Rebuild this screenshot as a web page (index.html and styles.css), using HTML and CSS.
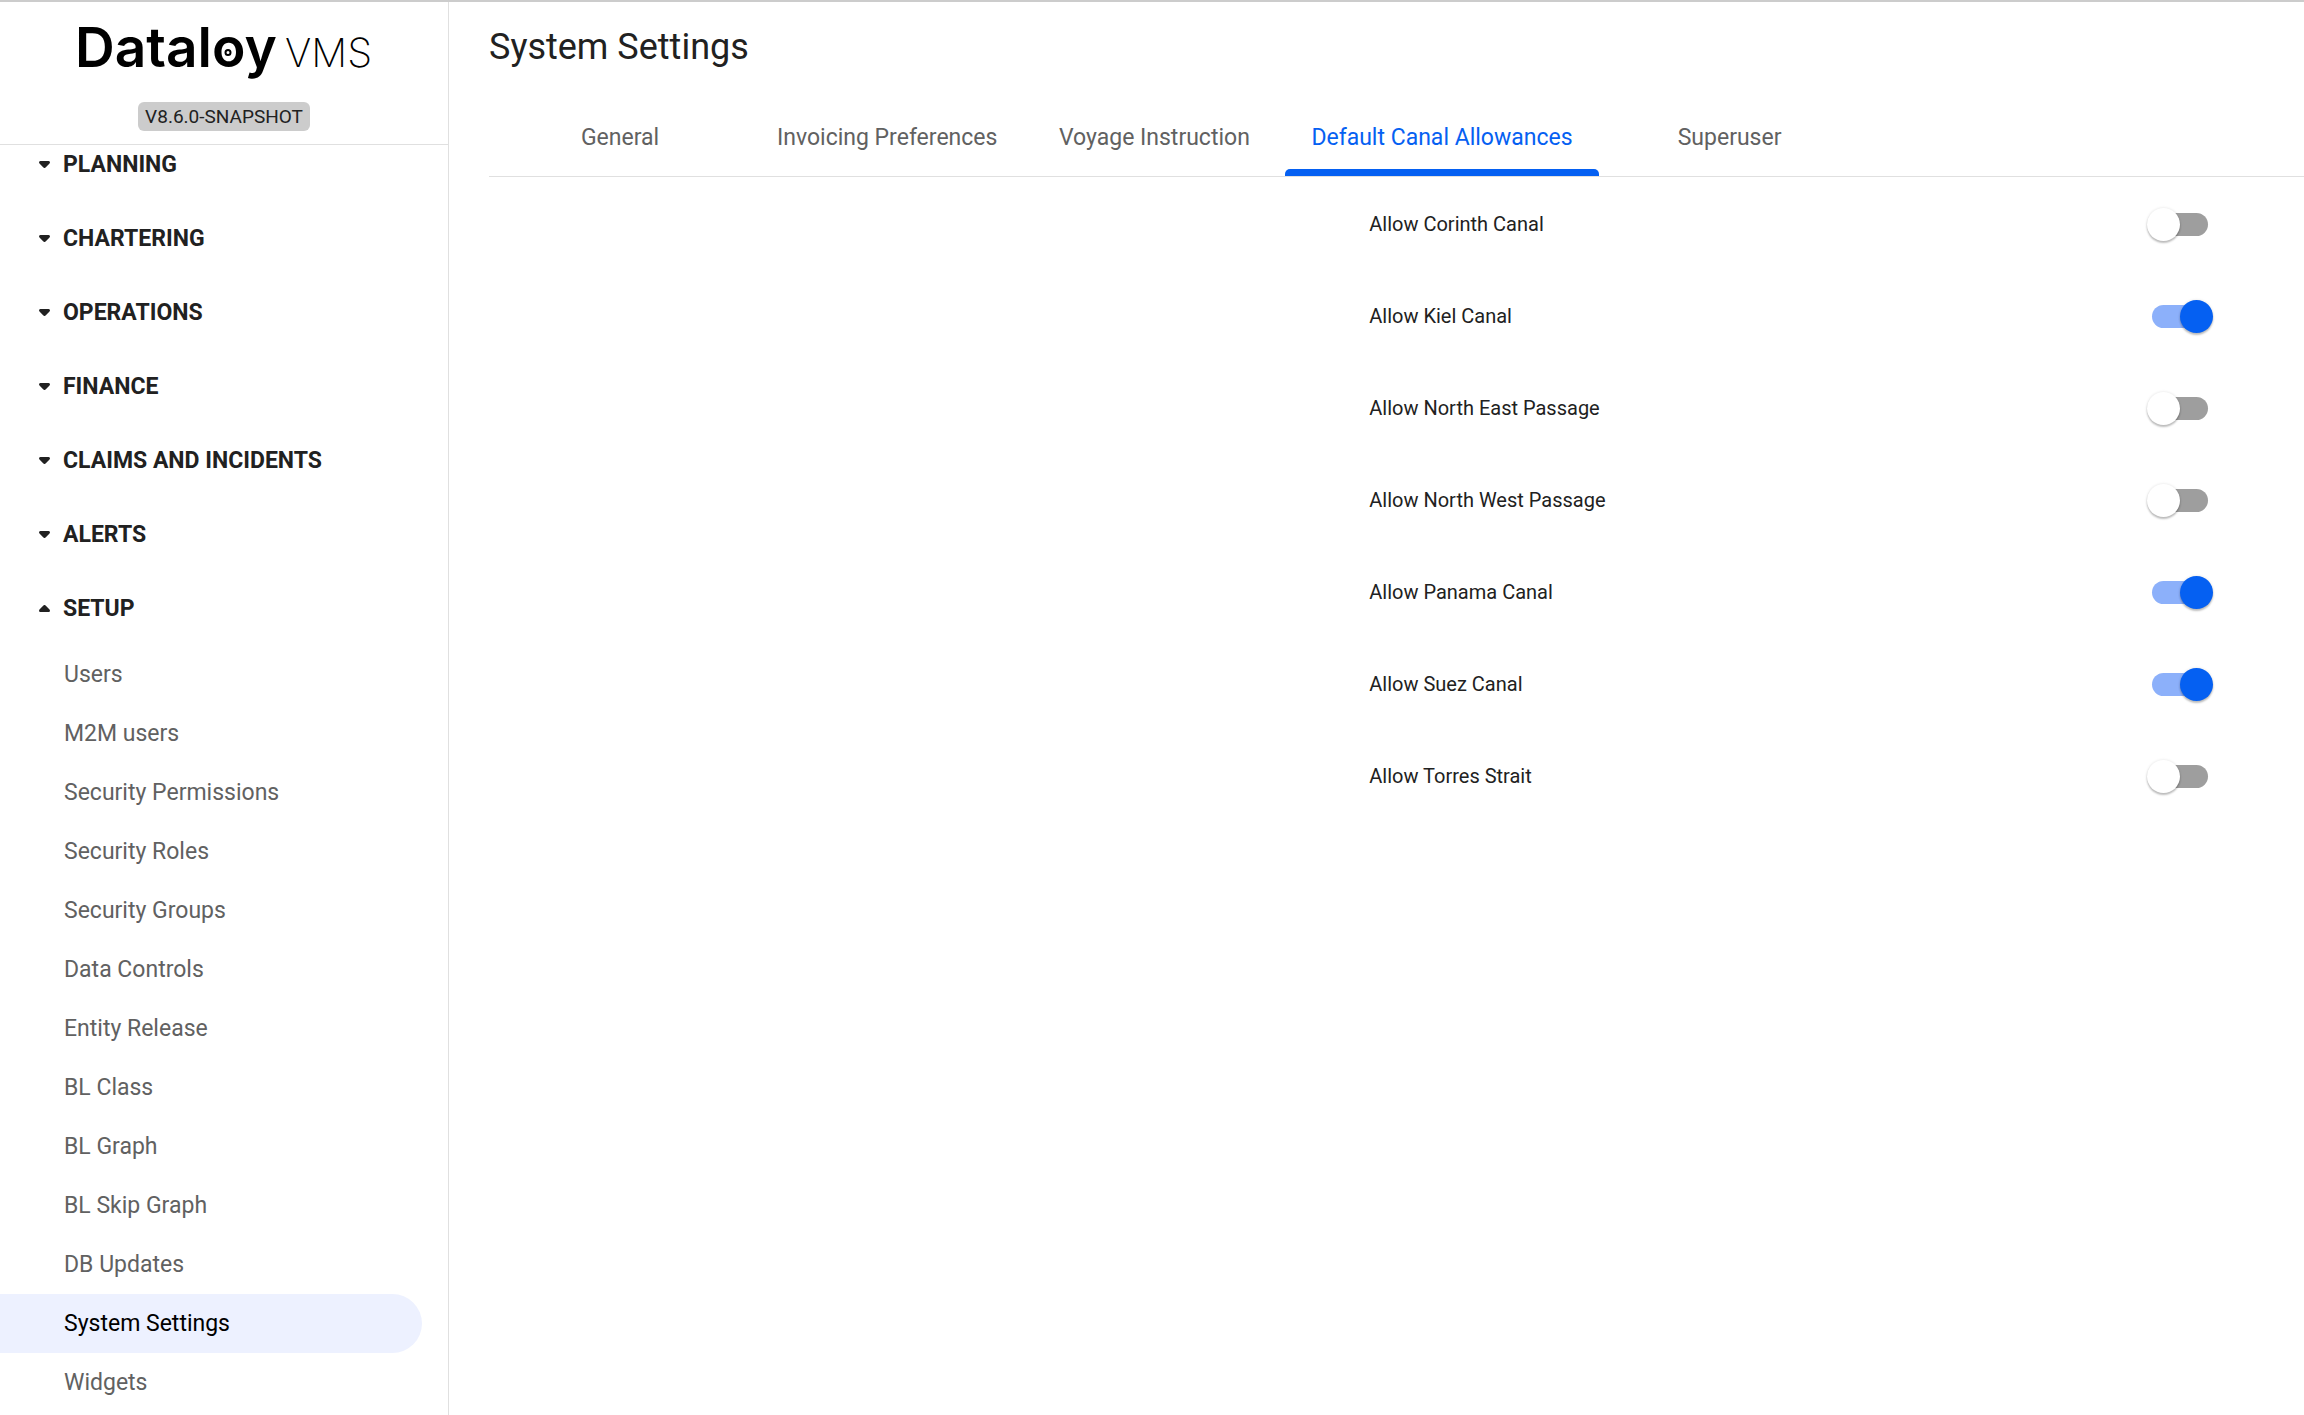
FILE: index.html
```
<!DOCTYPE html>
<html lang="en">
<head>
    <meta charset="UTF-8">
    <meta name="viewport" content="width=device-width, initial-scale=1.0">
    <title>System Settings - Dataloy VMS</title>
    <link rel="stylesheet" href="styles.css">
</head>
<body>
    <aside class="sidebar">
        <header class="brand">
            <svg class="logo" viewBox="0 0 300 70" role="img" aria-label="Dataloy VMS">
                <text class="logo-name" x="1" y="53">Dataloy</text>
                <text class="logo-product" x="211" y="53">VMS</text>
                <circle class="logo-dot" cx="154" cy="38.500" r="2.500"/>
            </svg>
            <span class="version">V8.6.0-SNAPSHOT</span>
        </header>
        <nav class="menu">
            <ul class="sections">
                <li><button type="button" class="section"><svg class="caret" viewBox="0 0 11 7"><path d="M1.5 0h8a1.4 1.4 0 0 1 1 2.4L6.6 6.5a1.6 1.6 0 0 1-2.2 0L.5 2.4A1.4 1.4 0 0 1 1.5 0z"/></svg>PLANNING</button></li>
                <li><button type="button" class="section"><svg class="caret" viewBox="0 0 11 7"><path d="M1.5 0h8a1.4 1.4 0 0 1 1 2.4L6.6 6.5a1.6 1.6 0 0 1-2.2 0L.5 2.4A1.4 1.4 0 0 1 1.5 0z"/></svg>CHARTERING</button></li>
                <li><button type="button" class="section"><svg class="caret" viewBox="0 0 11 7"><path d="M1.5 0h8a1.4 1.4 0 0 1 1 2.4L6.6 6.5a1.6 1.6 0 0 1-2.2 0L.5 2.4A1.4 1.4 0 0 1 1.5 0z"/></svg>OPERATIONS</button></li>
                <li><button type="button" class="section"><svg class="caret" viewBox="0 0 11 7"><path d="M1.5 0h8a1.4 1.4 0 0 1 1 2.4L6.6 6.5a1.6 1.6 0 0 1-2.2 0L.5 2.4A1.4 1.4 0 0 1 1.5 0z"/></svg>FINANCE</button></li>
                <li><button type="button" class="section"><svg class="caret" viewBox="0 0 11 7"><path d="M1.5 0h8a1.4 1.4 0 0 1 1 2.4L6.6 6.5a1.6 1.6 0 0 1-2.2 0L.5 2.4A1.4 1.4 0 0 1 1.5 0z"/></svg>CLAIMS AND INCIDENTS</button></li>
                <li><button type="button" class="section"><svg class="caret" viewBox="0 0 11 7"><path d="M1.5 0h8a1.4 1.4 0 0 1 1 2.4L6.6 6.5a1.6 1.6 0 0 1-2.2 0L.5 2.4A1.4 1.4 0 0 1 1.5 0z"/></svg>ALERTS</button></li>
                <li>
                    <button type="button" class="section" aria-expanded="true"><svg class="caret caret-up" viewBox="0 0 11 7"><path d="M1.5 0h8a1.4 1.4 0 0 1 1 2.4L6.6 6.5a1.6 1.6 0 0 1-2.2 0L.5 2.4A1.4 1.4 0 0 1 1.5 0z"/></svg>SETUP</button>
                    <ul class="links">
                        <li><a href="#">Users</a></li>
                        <li><a href="#">M2M users</a></li>
                        <li><a href="#">Security Permissions</a></li>
                        <li><a href="#">Security Roles</a></li>
                        <li><a href="#">Security Groups</a></li>
                        <li><a href="#">Data Controls</a></li>
                        <li><a href="#">Entity Release</a></li>
                        <li><a href="#">BL Class</a></li>
                        <li><a href="#">BL Graph</a></li>
                        <li><a href="#">BL Skip Graph</a></li>
                        <li><a href="#">DB Updates</a></li>
                        <li><a href="#" class="active" aria-current="page">System Settings</a></li>
                        <li><a href="#">Widgets</a></li>
                    </ul>
                </li>
            </ul>
        </nav>
    </aside>

    <main class="content">
        <h1>System Settings</h1>
        <div class="tabs" role="tablist">
            <button type="button" class="tab" role="tab">General</button>
            <button type="button" class="tab" role="tab">Invoicing Preferences</button>
            <button type="button" class="tab" role="tab">Voyage Instruction</button>
            <button type="button" class="tab tab-active" role="tab" aria-selected="true">Default Canal Allowances</button>
            <button type="button" class="tab" role="tab">Superuser</button>
        </div>
        <form class="allowances" action="#">
            <div class="row">
                <label for="corinth">Allow Corinth Canal</label>
                <input type="checkbox" class="toggle" id="corinth">
            </div>
            <div class="row">
                <label for="kiel">Allow Kiel Canal</label>
                <input type="checkbox" class="toggle" id="kiel" checked>
            </div>
            <div class="row">
                <label for="north-east">Allow North East Passage</label>
                <input type="checkbox" class="toggle" id="north-east">
            </div>
            <div class="row">
                <label for="north-west">Allow North West Passage</label>
                <input type="checkbox" class="toggle" id="north-west">
            </div>
            <div class="row">
                <label for="panama">Allow Panama Canal</label>
                <input type="checkbox" class="toggle" id="panama" checked>
            </div>
            <div class="row">
                <label for="suez">Allow Suez Canal</label>
                <input type="checkbox" class="toggle" id="suez" checked>
            </div>
            <div class="row">
                <label for="torres">Allow Torres Strait</label>
                <input type="checkbox" class="toggle" id="torres">
            </div>
        </form>
    </main>
</body>
</html>
```
FILE: styles.css
```
*{
    margin: 0;
    padding: 0;
    box-sizing: border-box;
}

body{
    display: flex;
    height: 100vh;
    overflow: hidden;
    border-top: 2px solid #ccc;
    font-family: Roboto, sans-serif;
    font-size: 23px;
    color: #212121;
    background: #fff;
}

ul{
    list-style: none;
}

button{
    border: none;
    background: none;
    font: inherit;
    color: inherit;
    cursor: pointer;
}

/* sidebar */
.sidebar{
    display: flex;
    flex-direction: column;
    flex: 0 0 449px;
    border-right: 1px solid #e0e0e0;
}

.brand{
    display: flex;
    flex-direction: column;
    align-items: center;
    padding: 12px 0 13px;
    border-bottom: 1px solid #e0e0e0;
}

.logo{
    width: 300px;
    height: 70px;
    margin-bottom: 18px;
    fill: #000;
    overflow: visible;
}

.logo-name{
    font-family: Inter, sans-serif;
    font-size: 55px;
    font-weight: 600;
}

.logo-product{
    font-family: Inter, sans-serif;
    font-size: 40px;
    font-weight: 200;
}

.logo-dot{
    fill: none;
    stroke: #000;
    stroke-width: 2;
}

.version{
    padding: 0 7px;
    border-radius: 6px;
    font-size: 19px;
    line-height: 29px;
    background: #ccc;
}

.menu{
    flex: 1;
    overflow: hidden;
}

/* list is scrolled slightly under the brand */
.sections{
    margin-top: -18px;
}

.section{
    display: flex;
    align-items: center;
    gap: 13px;
    width: 100%;
    height: 74px;
    padding-left: 39px;
    font-weight: 700;
}

.caret{
    width: 11px;
    height: 7px;
    fill: #212121;
}

.caret-up{
    transform: rotate(180deg);
}

.links a{
    display: block;
    margin-right: 26px;
    padding-left: 64px;
    border-radius: 0 30px 30px 0;
    line-height: 59px;
    color: #616161;
    text-decoration: none;
}

.links .active{
    color: #000;
    background: #edf1ff;
}

/* content */
.content{
    flex: 1;
    padding-left: 40px;
}

h1{
    padding: 21px 0 26px;
    font-size: 36px;
    font-weight: 400;
    line-height: 48px;
}

.tabs{
    display: flex;
    border-bottom: 1px solid #e0e0e0;
}

.tab{
    position: relative;
    min-width: 262px;
    height: 79px;
    padding: 2px 26px 0;
    color: #616161;
}

.tab-active{
    color: #0560f2;
}

.tab-active::after{
    content: "";
    position: absolute;
    left: 0;
    right: 0;
    bottom: 0;
    height: 7px;
    border-radius: 5px 5px 0 0;
    background: #0560f2;
}

.allowances{
    margin: 1px 96px 0 48.5%;
}

.row{
    display: flex;
    align-items: center;
    justify-content: space-between;
    height: 92px;
    font-size: 20px;
}

.toggle{
    appearance: none;
    position: relative;
    width: 56px;
    height: 23px;
    border-radius: 12px;
    background: #9e9e9e;
    cursor: pointer;
}

.toggle::before{
    content: "";
    position: absolute;
    top: -5px;
    left: -5px;
    width: 33px;
    height: 33px;
    border-radius: 50%;
    background: #fff;
    box-shadow: 0 2px 2px rgba(0, 0, 0, 0.24), 0 0 3px rgba(0, 0, 0, 0.12);
}

.toggle:checked{
    background: #8cb0fa;
}

.toggle:checked::before{
    left: 28px;
    background: #0560f2;
}
```
